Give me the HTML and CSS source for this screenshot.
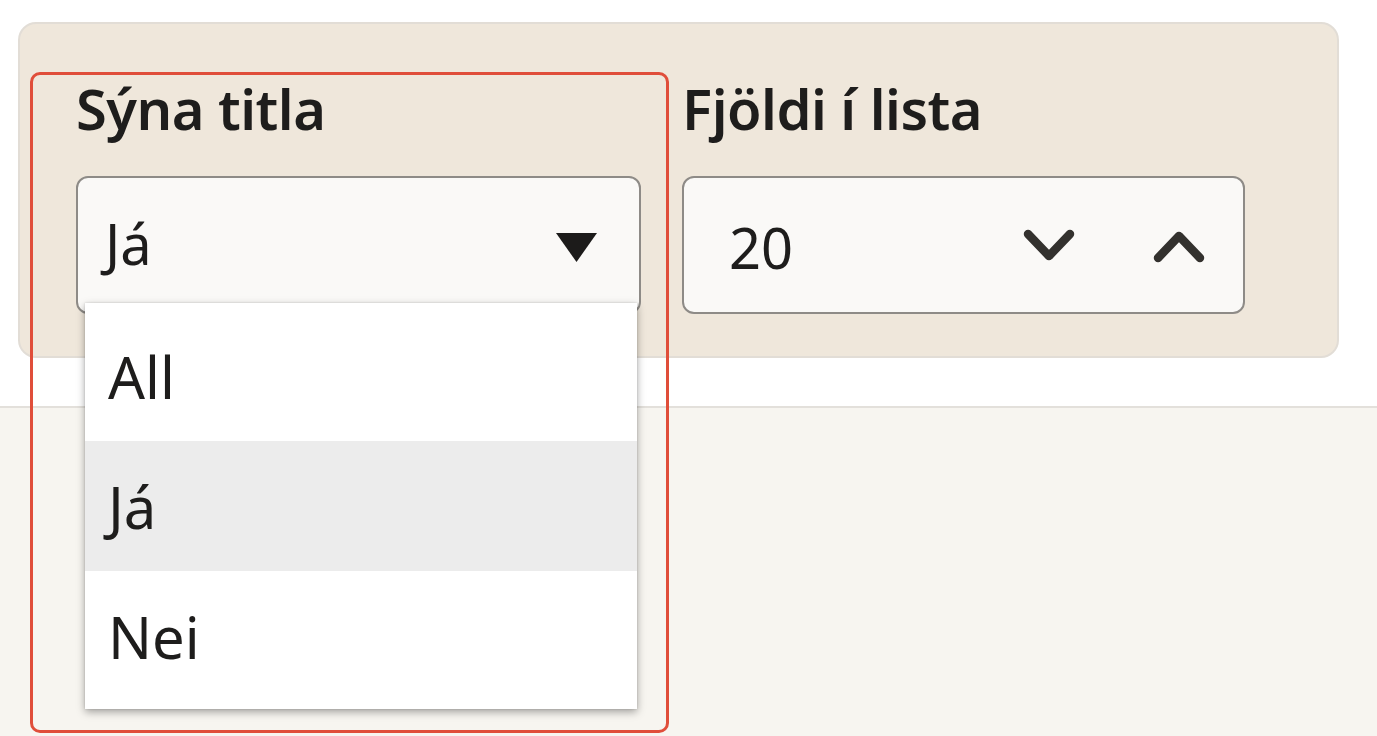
FILE: index.html
```html
<!DOCTYPE html>
<html lang="is">
<head>
<meta charset="utf-8">
<title>Stillingar</title>
<link rel="stylesheet" href="styles.css">
</head>
<body>
<div class="top">
  <div class="panel">
    <div class="field field-select">
      <div class="label">Sýna titla</div>
      <div class="box select">
        <span class="value">Já</span>
        <svg class="caret" width="41" height="29" viewBox="0 0 41 29"><path d="M0 0 H41 L20.5 29 Z" fill="#1c1b1a"/></svg>
      </div>
      <ul class="menu">
        <li class="opt">All</li>
        <li class="opt active">Já</li>
        <li class="opt">Nei</li>
      </ul>
      <div class="highlight"></div>
    </div>
    <div class="field field-number">
      <div class="label">Fjöldi í lista</div>
      <div class="box number">
        <span class="value">20</span>
        <div class="steps">
          <svg class="chev" width="52" height="36" viewBox="0 0 52 36"><path d="M5 6 L26 28 L47 6" fill="none" stroke="#33312e" stroke-width="8.5" stroke-linecap="round" stroke-linejoin="round"/></svg>
          <svg class="chev" width="52" height="36" viewBox="0 0 52 36"><path d="M5 30 L26 8 L47 30" fill="none" stroke="#33312e" stroke-width="8.5" stroke-linecap="round" stroke-linejoin="round"/></svg>
        </div>
      </div>
    </div>
  </div>
</div>
<div class="bottom"></div>
</body>
</html>
```
FILE: styles.css
```css
html, body {
  margin: 0;
  padding: 0;
}
body {
  font-family: "Noto Sans", "Open Sans", "DejaVu Sans", sans-serif;
  color: #1e1d1c;
  background: #f7f5f0;
  width: 1377px;
  height: 736px;
  overflow: hidden;
}
.top {
  background: #ffffff;
  height: 408px;
  padding: 22px 38px 0 18px;
  box-sizing: border-box;
  border-bottom: 2px solid #e3e0db;
}
.panel {
  height: 336px;
  box-sizing: border-box;
  background: #efe7db;
  border: 2px solid #e2ddd6;
  border-radius: 18px;
  padding: 51px 0 0 56px;
  display: flex;
  gap: 41px;
}
.field {
  position: relative;
  display: flex;
  flex-direction: column;
}
.field-select { width: 565px; }
.field-number { width: 563px; }
.label {
  font-size: 56px;
  font-weight: 600;
  line-height: 67px;
  height: 67px;
  margin-bottom: 34px;
  letter-spacing: -0.5px;
  white-space: nowrap;
}
.box {
  height: 138px;
  box-sizing: border-box;
  border: 2px solid #8e8b87;
  border-radius: 12px;
  background: #faf9f7;
  display: flex;
  align-items: center;
}
.value {
  font-size: 56px;
  line-height: 1;
}
.select {
  padding: 0 42px 0 27px;
  justify-content: space-between;
}
.select .value { margin-top: -4px; }
.caret { margin-top: 4px; }
.number {
  padding: 0 38px 0 45px;
  justify-content: space-between;
}
.number .value { margin-top: 4px; }
.steps {
  display: flex;
  gap: 78px;
  margin-top: 2px;
}
.menu {
  position: absolute;
  left: 9px;
  top: 228px;
  width: 552px;
  margin: 0;
  padding: 8px 0;
  list-style: none;
  background: #ffffff;
  box-shadow: 0 3px 8px rgba(0, 0, 0, 0.35), 0 0 2px rgba(0, 0, 0, 0.15);
}
.opt {
  height: 130px;
  display: flex;
  align-items: center;
  padding-left: 23px;
  font-size: 58px;
  color: #1e1d1c;
}
.opt.active { background: #ececec; }
.highlight {
  position: absolute;
  left: -46px;
  top: -3px;
  width: 639px;
  height: 661px;
  box-sizing: border-box;
  border: 3px solid #e04e3a;
  border-radius: 10px;
  pointer-events: none;
}
```
